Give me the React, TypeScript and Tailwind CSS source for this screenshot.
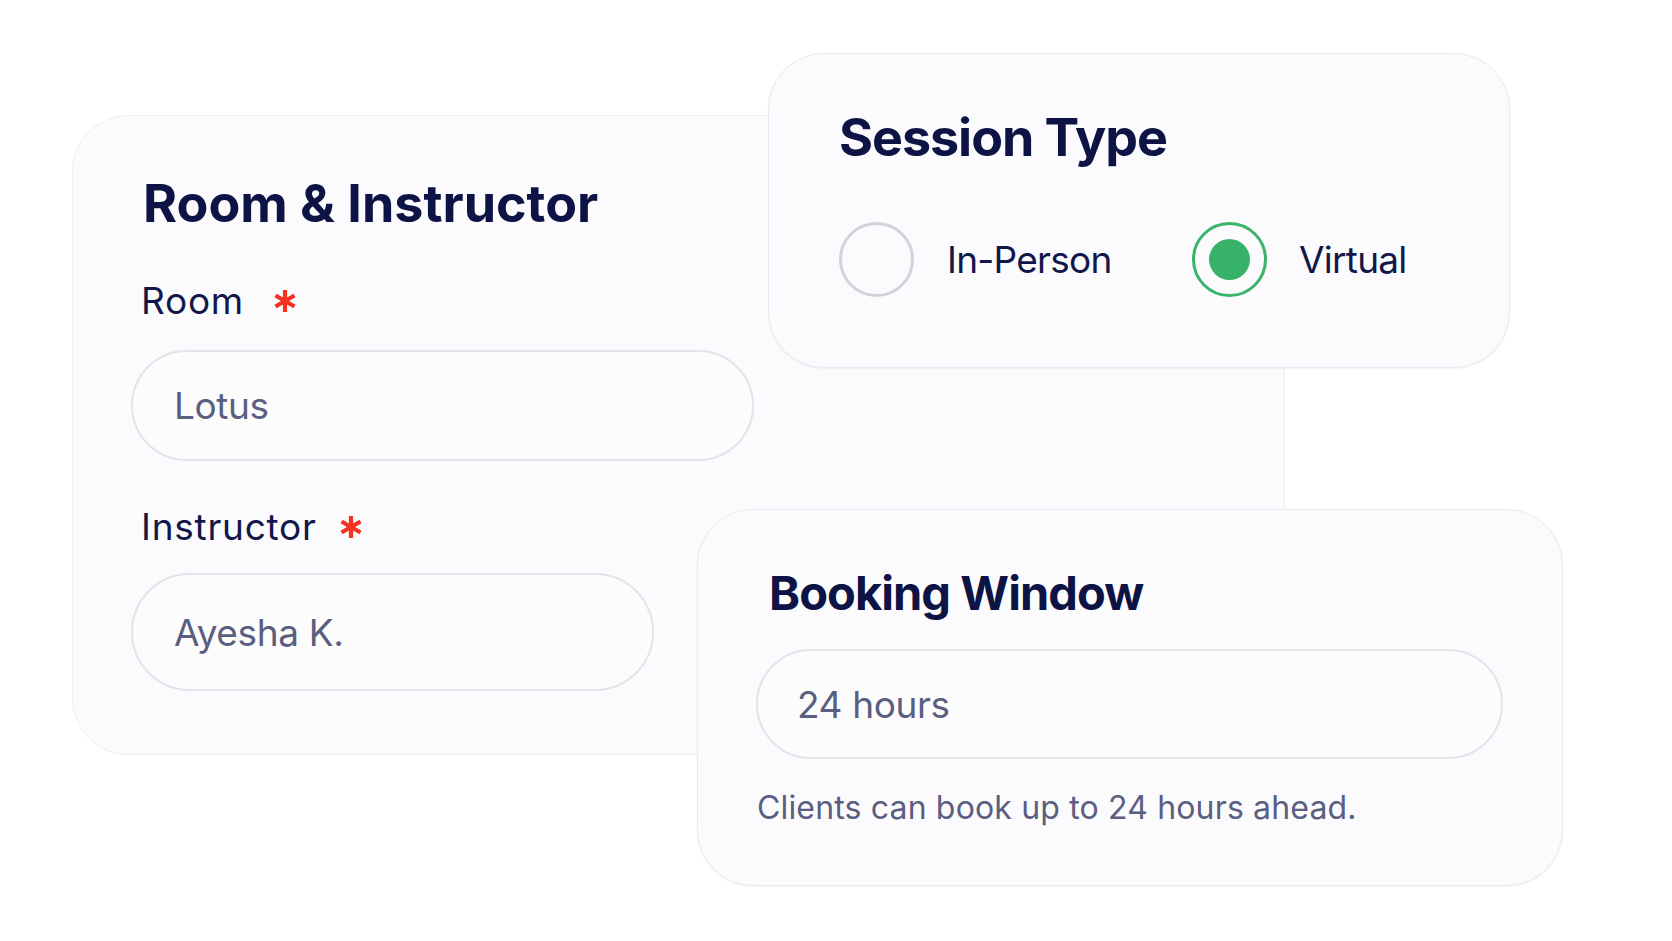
import React from 'react';

const FONT = { fontFamily: 'Inter, "Noto Sans", sans-serif' };

const Asterisk = () => (
  <svg width="22" height="24" viewBox="0 0 22 24" className="mt-[7px] shrink-0" aria-hidden>
    <g stroke="#f4321f" strokeWidth="4.2" strokeLinecap="butt">
      <line x1="11" y1="1" x2="11" y2="23" />
      <line x1="1.5" y1="6.5" x2="20.5" y2="17.5" />
      <line x1="1.5" y1="17.5" x2="20.5" y2="6.5" />
    </g>
  </svg>
);

type FieldProps = {
  label: string;
  value: string;
  inputClass: string;
  wrapClass: string;
  starGap: string;
  inputGap: string;
};

const Field = ({ label, value, inputClass, wrapClass, starGap, inputGap }: FieldProps) => (
  <div className={wrapClass}>
    <div className="flex items-start pl-[10px]">
      <span className="text-[37px] leading-[37px] tracking-[0.02em] text-[#12174a]">{label}</span>
      <span className={starGap}>
        <Asterisk />
      </span>
    </div>
    <div
      className={`${inputClass} ${inputGap} flex items-center rounded-full border-2 border-[#e3e3ec] bg-[#fcfcfd] pl-[41px]`}
    >
      <span className="text-[37px] leading-[37px] tracking-[-0.01em] text-[#5a5e80]">{value}</span>
    </div>
  </div>
);

const Radio = ({ checked }: { checked: boolean }) =>
  checked ? (
    <div className="flex h-[75px] w-[75px] shrink-0 items-center justify-center rounded-full border-[3px] border-[#3bb36a]">
      <div className="h-[41px] w-[41px] rounded-full bg-[#38b268]" />
    </div>
  ) : (
    <div className="h-[75px] w-[75px] shrink-0 rounded-full border-[3px] border-[#d1d3db]" />
  );

export default function App() {
  return (
    <div className="relative h-[941px] w-[1672px] overflow-hidden bg-white" style={FONT}>
      {/* Room & Instructor */}
      <div className="absolute left-[72px] top-[115px] h-[640px] w-[1213px] rounded-[56px] border border-[#eeeef3] bg-[#fbfbfd] pl-[58px] pt-[62px]">
        <h2 className="pl-[12px] text-[52px] font-bold leading-[52px] tracking-normal text-[#0e1345]">
          Room &amp; Instructor
        </h2>
        <Field
          label="Room"
          value="Lotus"
          inputClass="h-[111px] w-[623px]"
          wrapClass="mt-[52px]"
          starGap="ml-[30px]"
          inputGap="mt-[31px]"
        />
        <Field
          label="Instructor"
          value="Ayesha K."
          inputClass="h-[118px] w-[523px]"
          wrapClass="mt-[47px]"
          starGap="ml-[23px]"
          inputGap="mt-[28px]"
        />
      </div>

      {/* Session Type */}
      <div className="absolute left-[768px] top-[53px] h-[315px] w-[742px] rounded-[56px] border border-[#e9e9f0] bg-[#fbfbfd] pl-[70px] pt-[58px] shadow-[0_1px_2px_rgba(30,30,80,0.05)]">
        <h2 className="text-[52px] font-bold leading-[52px] tracking-[-0.02em] text-[#0e1345]">Session Type</h2>
        <div className="mt-[58px] flex items-center">
          <div className="flex w-[353px] items-center">
            <Radio checked={false} />
            <span className="ml-[33px] text-[37px] leading-[37px] tracking-[-0.02em] text-[#12174a]">In-Person</span>
          </div>
          <div className="flex items-center">
            <Radio checked />
            <span className="ml-[32px] text-[37px] leading-[37px] tracking-[-0.02em] text-[#12174a]">Virtual</span>
          </div>
        </div>
      </div>

      {/* Booking Window */}
      <div className="absolute left-[697px] top-[509px] h-[377px] w-[866px] rounded-[56px] border border-[#e9e9f0] bg-[#fbfbfd] pl-[58px] pr-[59px] pt-[59px] shadow-[0_1px_2px_rgba(30,30,80,0.05)]">
        <h2 className="pl-[13px] text-[47px] font-bold leading-[47px] tracking-[-0.02em] text-[#0e1345]">
          Booking Window
        </h2>
        <div className="mt-[33px] flex h-[110px] items-center rounded-full border-2 border-[#e3e3ec] bg-[#fcfcfd] pl-[39px]">
          <span className="text-[37px] leading-[37px] tracking-[-0.01em] text-[#5a5e80]">24 hours</span>
        </div>
        <p className="mt-[33px] pl-[1px] text-[32px] leading-[32px] tracking-[0.005em] text-[#5a5e80]">
          Clients can book up to 24 hours ahead.
        </p>
      </div>
    </div>
  );
}
